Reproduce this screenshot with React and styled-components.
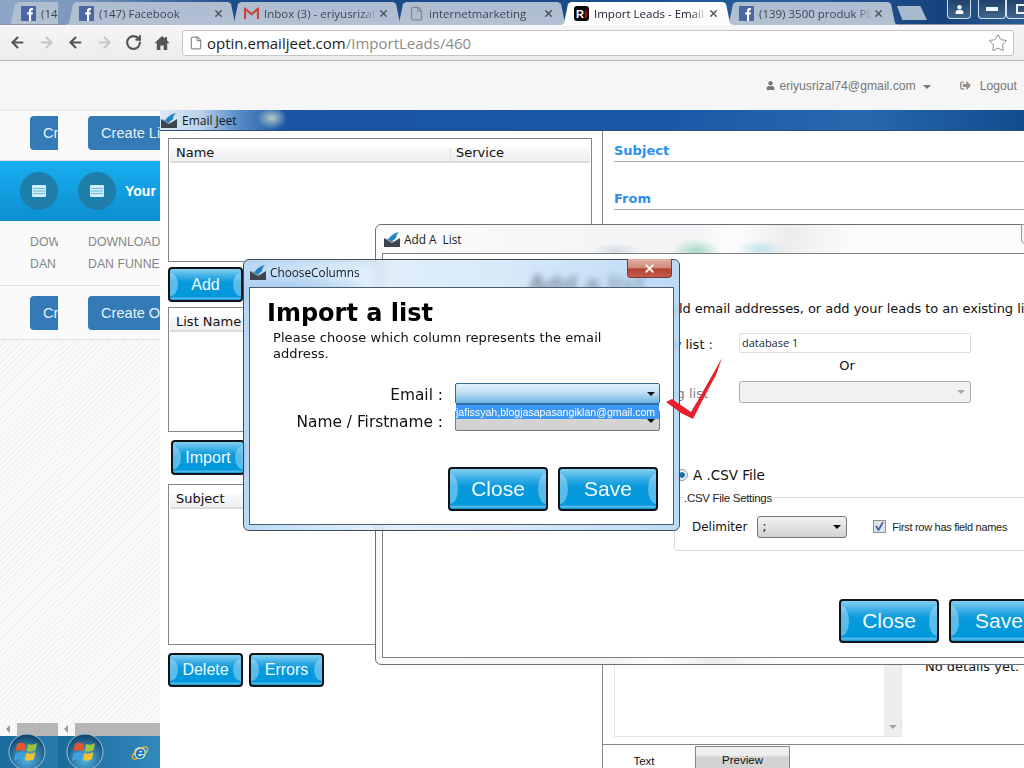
import React from "react";
import styled, { createGlobalStyle } from "styled-components";
import { ArrowLeft, ArrowRight, RotateCw, Star, X, File } from "lucide-react";
import { FaUser, FaSignOutAlt } from "react-icons/fa";

const GlobalStyle = createGlobalStyle`
  html, body {
    margin: 0;
    padding: 0;
    overflow: hidden;
    background: #fff;
  }
  * {
    box-sizing: border-box;
  }
`;

const wpfFont = `"DejaVu Sans", Verdana, sans-serif`;
const arialFont = `"Liberation Sans", Arial, sans-serif`;
const uiFont = `"Open Sans", "Noto Sans", sans-serif`;

const Screen = styled.div`
  position: relative;
  width: 1024px;
  height: 768px;
  overflow: hidden;
  font-family: ${arialFont};
`;

/* browser chrome */
const TabStrip = styled.div`
  display: flex;
  height: 25px;
  background: linear-gradient(
    90deg,
    #8ea6c8 0,
    #7f9ac0 58px,
    #7d99c0 70px,
    #1d4c8a 235px,
    #1a4a88 560px,
    #2b5f9e 800px,
    #15427c 940px,
    #2c5c94 1024px
  );
  border-bottom: 1px solid #8d99a8;
`;

const TabClip = styled.div`
  flex: none;
  width: 58px;
  overflow: hidden;
  padding-left: 8px;
  padding-top: 2px;
`;

const TabRow = styled.div`
  display: flex;
  flex: none;
  padding-left: 8px;
  padding-top: 2px;
`;

const Tab = styled.div`
  display: flex;
  flex: none;
  align-items: center;
  width: 172px;
  height: 23px;
  padding: 0 13px 0 13px;
  margin-left: ${(p) => (p.$first ? "0" : "-7px")};
  position: relative;
  z-index: ${(p) => (p.$active ? 2 : 1)};
  clip-path: polygon(0 100%, 3px 92%, 7px 8%, 10px 0, calc(100% - 10px) 0, calc(100% - 7px) 8%, calc(100% - 3px) 92%, 100% 100%);
  background: ${(p) =>
    p.$active
      ? "linear-gradient(#ffffff, #fbfbfb)"
      : "linear-gradient(#adbccf, #b3c1d3)"};
`;

const TabLabel = styled.span`
  flex: 1;
  margin-left: 5px;
  overflow: hidden;
  white-space: nowrap;
  font: 11.5px ${uiFont};
  color: ${(p) => (p.$active ? "#1c1c30" : "#3e4654")};
  -webkit-mask-image: linear-gradient(90deg, #000 85%, transparent 100%);
  mask-image: linear-gradient(90deg, #000 85%, transparent 100%);
`;

const TabClose = styled(X)`
  flex: none;
  margin-right: 1px;
  color: #4c5058;
`;

const NewTab = styled.div`
  flex: none;
  width: 30px;
  height: 14px;
  margin: 4px 0 0 -1px;
  background: #a9bace;
  clip-path: polygon(0 0, 78% 0, 100% 100%, 18% 100%);
`;

const WindowButtons = styled.div`
  display: flex;
  flex: none;
  height: 19px;
  margin-left: 20px;
  margin-top: -2px;
  gap: 7px;
`;

const CaptionButton = styled.div`
  display: flex;
  align-items: center;
  justify-content: center;
  width: ${(p) => p.$width}px;
  height: 19px;
  margin-left: ${(p) => (p.$joined ? "-7px" : "0")};
  border: 1px solid #d5dfea;
  border-top: 0;
  border-radius: 0 0 4px 4px;
  background: linear-gradient(#1f426a, #3f6690);
`;

const Toolbar = styled.div`
  display: flex;
  align-items: center;
  height: 36px;
  padding-left: 9px;
  background: linear-gradient(#f6f6f6, #ececec);
  border-bottom: 1px solid #b4b4b4;
`;

const NavGroup = styled.div`
  display: flex;
  flex: none;
  align-items: center;
  gap: 12px;
  width: ${(p) => p.$width}px;
`;

const AddressBar = styled.div`
  display: flex;
  flex: none;
  align-items: center;
  width: 832px;
  height: 26px;
  margin-left: 0;
  padding: 0 5px 0 6px;
  background: #fff;
  border: 1px solid #c4c4c4;
  border-radius: 3px;
  font: 15px ${uiFont};
  color: #8b8b8b;
`;

const Host = styled.span`
  margin-left: 4px;
  color: #1c1c1c;
`;

const AddressStar = styled(Star)`
  margin-left: auto;
  color: #8c8c8c;
`;

const PageHeader = styled.div`
  display: flex;
  align-items: center;
  justify-content: flex-end;
  height: 49px;
  padding: 0 7px 0 0;
  background: #f6f6f6;
  font-size: 12.2px;
  color: #777;
`;

const UserMenu = styled.div`
  display: flex;
  align-items: center;
  gap: 4px;
`;

const Caret = styled.span`
  width: 0;
  height: 0;
  margin-left: 3px;
  margin-top: 2px;
  border-left: 4px solid transparent;
  border-right: 4px solid transparent;
  border-top: 4px solid #777;
`;

const LogoutLink = styled.div`
  display: flex;
  align-items: center;
  gap: 9px;
  margin-left: 29px;
`;

/* web page sliced behind the window */
const Workspace = styled.div`
  display: flex;
  height: 658px;
`;

const PageSlice = styled.div`
  flex: none;
  width: ${(p) => p.$width}px;
  overflow: hidden;
`;

const PageColumn = styled.div`
  display: flex;
  flex-direction: column;
  width: 300px;
  height: 658px;
  background: #fafafa;
`;

const ButtonRow = styled.div`
  height: ${(p) => p.$height}px;
  padding: ${(p) => p.$top}px 0 0 30px;
  border-top: ${(p) => (p.$ruled ? "1px solid #e2e2e2" : "0")};
  border-bottom: 1px solid #dedede;
`;

const BlueButton = styled.div`
  width: 120px;
  height: 34px;
  padding-left: 13px;
  border-radius: 4px;
  background: #337ab7;
  color: #e6f0f8;
  font-size: 14.6px;
  line-height: 34px;
  white-space: nowrap;
`;

const Band = styled.div`
  display: flex;
  align-items: center;
  gap: 9px;
  height: 60px;
  padding-left: 20px;
  background: linear-gradient(#17aef0, #0c8fcf);
  color: #fff;
  font-size: 14px;
  font-weight: bold;
  white-space: nowrap;
`;

const BandCircle = styled.div`
  display: flex;
  align-items: center;
  justify-content: center;
  flex: none;
  width: 38px;
  height: 38px;
  border-radius: 50%;
  background: #1e7ea9;
`;

const Downloads = styled.div`
  height: 64px;
  padding: 10px 0 0 30px;
  color: #868686;
  font-size: 12.3px;
  line-height: 22px;
  white-space: nowrap;
`;

const Hatch = styled.div`
  flex: 1;
  background: repeating-linear-gradient(135deg, #f0f0f0 0 1px, #fafafa 1px 4px);
`;

const PageScroll = styled.div`
  display: flex;
  align-items: center;
  flex: none;
  height: 14px;
  padding-left: 6px;
  background: #f7f7f7;
`;

const ScrollArrow = styled.span`
  width: 0;
  height: 0;
  border-top: 4px solid transparent;
  border-bottom: 4px solid transparent;
  border-right: 4px solid #9a9a9a;
`;

const ScrollThumb = styled.div`
  flex: 1;
  height: 13px;
  margin-left: 7px;
  background: #b6b6b6;
`;

const Taskbar = styled.div`
  display: flex;
  align-items: flex-start;
  flex: none;
  height: 32px;
  padding-left: 8px;
  background: linear-gradient(90deg, #1b6a9c 0, #2a7fb0 70px, #3d9dcf 160px);
`;

const Orb = styled.svg`
  flex: none;
  margin-top: -3px;
`;

const IeLogo = styled.svg`
  flex: none;
  margin: 8px 0 0 27px;
`;

/* desktop windows */
const MainWindow = styled.div`
  display: flex;
  flex-direction: column;
  flex: 1;
  min-width: 0;
  background: #fff;
`;

const MainTitle = styled.div`
  display: flex;
  align-items: center;
  flex: none;
  gap: 5px;
  height: 21px;
  padding-left: 1px;
  border-bottom: 1px solid #2c4f7c;
  background:
    radial-gradient(ellipse 15px 11px at 112px 8px, rgba(215, 228, 205, 0.8) 0, rgba(223, 232, 200, 0) 100%),
    linear-gradient(90deg, #dde9f5 0, #bcd4ec 40px, #5c90ca 75px, #1a55a5 125px, #1a58a6 500px, #2868ae 700px, #114c8e 864px);
  font: 12px ${uiFont};
  color: #101820;
`;

const MainBody = styled.div`
  display: flex;
  flex: 1;
  min-height: 0;
`;

const LeftPane = styled.div`
  flex: none;
  width: 442px;
  padding: 7px 10px 0 8px;
`;

const Panel = styled.div`
  height: ${(p) => p.$height}px;
  margin-top: ${(p) => p.$gap}px;
  padding: 9px 1px 0;
  border: 1px solid #82858c;
`;

const PanelHead = styled.div`
  display: flex;
  height: 15px;
  padding-left: 6px;
  border-bottom: 2px solid #dcdcdc;
  background: linear-gradient(#f8f8f9, #eeeff1);
  font: 13px/10px ${wpfFont};
  color: #111;
`;

const HeadCell = styled.div`
  width: ${(p) => p.$width}px;
  border-right: ${(p) => (p.$last ? "0" : "1px solid #e2e2e2")};
  padding-left: ${(p) => (p.$last ? "5px" : "0")};
`;

const Actions = styled.div`
  display: flex;
  gap: ${(p) => p.$gap}px;
  margin-top: ${(p) => p.$top}px;
  padding-left: ${(p) => p.$left || 0}px;
`;

const GlassButton = styled.div`
  position: relative;
  display: flex;
  align-items: center;
  justify-content: center;
  flex: none;
  width: ${(p) => p.$width}px;
  height: ${(p) => p.$height}px;
  border: 2px solid #101418;
  border-radius: 4px;
  overflow: hidden;
  background: linear-gradient(
    #86d0f2 0,
    #3fb0e6 22%,
    #0a9adc 42%,
    #0098dc 90%,
    #5bbfec 94%,
    #0a92d4 100%
  );
  color: #f4fbff;
  font-family: ${arialFont};
  font-size: ${(p) => p.$size}px;

  &::before,
  &::after {
    content: "";
    position: absolute;
    top: 12%;
    bottom: 12%;
    width: 8px;
    background: rgba(190, 230, 250, 0.45);
  }
  &::before {
    left: 0;
    border-radius: 0 100% 100% 0 / 0 50% 50% 0;
  }
  &::after {
    right: 0;
    border-radius: 100% 0 0 100% / 50% 0 0 50%;
  }
`;

const RightPane = styled.div`
  display: flex;
  flex-direction: column;
  flex: 1;
  min-width: 0;
  padding-left: 11px;
  border-left: 1px solid #84878d;
`;

const FieldHead = styled.div`
  flex: none;
  height: ${(p) => p.$height}px;
  padding-top: ${(p) => p.$top}px;
  border-bottom: 1px solid #a9abaf;
  color: #2a90ee;
  font: bold 13px/16px ${wpfFont};
`;

const DetailRow = styled.div`
  display: flex;
  flex: none;
  height: 97px;
  margin-top: 430px;
`;

const MessageBox = styled.div`
  display: flex;
  justify-content: flex-end;
  flex: none;
  width: 288px;
  border: 1px solid #e4e5e9;
`;

const MessageScroll = styled.div`
  display: flex;
  align-items: flex-end;
  justify-content: center;
  width: 17px;
  padding-bottom: 7px;
  background: #eeeeee;

  &::after {
    content: "";
    border-left: 4px solid transparent;
    border-right: 4px solid transparent;
    border-top: 4px solid #a4a4a4;
  }
`;

const DetailText = styled.div`
  margin-left: 23px;
  padding-top: 19px;
  white-space: nowrap;
  font: 13px/16px ${wpfFont};
  color: #111;
`;

const TabBar = styled.div`
  display: flex;
  flex: none;
  height: 24px;
  margin: 7px 0 0 -11px;
  border-top: 1px solid #84878d;
`;

const DocTab = styled.div`
  flex: none;
  width: ${(p) => p.$width}px;
  height: ${(p) => (p.$raised ? "23px" : "24px")};
  margin-top: ${(p) => (p.$raised ? "1px" : "0")};
  padding: ${(p) => (p.$raised ? "6px 0 0" : "9px 10px 0 0")};
  border: ${(p) => (p.$raised ? "1px solid #84878d" : "0")};
  border-bottom: 0;
  background: ${(p) =>
    p.$raised ? "linear-gradient(#f2f2f2 0, #ececec 40%, #d4d4d4 45%, #d2d2d2 100%)" : "#fff"};
  text-align: center;
  font-size: 11.5px;
  line-height: 14px;
  color: #111;
`;

const AddListWindow = styled.div`
  position: absolute;
  left: 375px;
  top: 224px;
  display: flex;
  flex-direction: column;
  width: 720px;
  height: 441px;
  padding: 0 6px 6px;
  border: 1px solid #6d7177;
  border-radius: 6px;
  background:
    radial-gradient(ellipse 24px 12px at 320px 26px, #a9d8c8 0, rgba(169, 216, 200, 0) 100%),
    radial-gradient(ellipse 24px 9px at 385px 24px, #c2e2ee 0, rgba(194, 226, 238, 0) 100%),
    radial-gradient(ellipse 26px 8px at 240px 26px, #d7dde8 0, rgba(215, 221, 232, 0) 100%),
    linear-gradient(100deg, #fbfbfb 0, #f1f3f4 40%, #fdfdfd 45%, #ececec 52%, #fbfbfb 60%);
`;

const GlassTitle = styled.div`
  display: flex;
  align-items: center;
  flex: none;
  gap: 4px;
  height: ${(p) => p.$height}px;
  padding-left: ${(p) => p.$left}px;
  padding-bottom: ${(p) => p.$pad}px;
  font: 11.8px ${uiFont};
  color: #151a20;
  white-space: pre;
`;

const TitleStub = styled.div`
  position: absolute;
  left: 645px;
  top: -1px;
  width: 40px;
  height: 20px;
  border: 1px solid #999;
  border-radius: 0 0 4px 4px;
  background: #f5f5f5;
`;

const AddListBody = styled.div`
  flex: 1;
  min-height: 0;
  padding-top: 19px;
  border: 1px solid #7d8187;
  background: #fff;
  color: #111;
  font: 13px ${wpfFont};
`;

const BlurredHeading = styled.div`
  height: 27px;
  padding-left: 146px;
  font: bold 22px/22px ${wpfFont};
  color: #111;
`;

const IntroText = styled.div`
  height: 17px;
  margin-top: 1px;
  padding-left: 150px;
  white-space: nowrap;
  line-height: 16px;
  letter-spacing: -0.05px;
`;

const FormGrid = styled.div`
  display: grid;
  grid-template-columns: 330px 232px;
  column-gap: 26px;
  align-items: center;
  margin-top: 15px;
`;

const FormLabel = styled.div`
  padding-right: ${(p) => (p.$muted ? "5px" : "0")};
  padding-top: 3px;
  text-align: right;
  color: ${(p) => (p.$muted ? "#808080" : "#111")};
  white-space: nowrap;
`;

const TextInput = styled.div`
  height: 20px;
  padding-left: 2px;
  border: 1px solid #d9dce2;
  border-radius: 2px;
  font: 11px/17px ${uiFont};
  color: #202a38;
`;

const OrText = styled.div`
  grid-column: 2;
  height: 28px;
  padding: 5px 16px 0 0;
  text-align: center;
  line-height: 16px;
`;

const DisabledSelect = styled.div`
  display: flex;
  align-items: center;
  justify-content: flex-end;
  height: 22px;
  padding-right: 5px;
  border: 1px solid #acacac;
  border-radius: 3px;
  background: #f1f1f1;

  &::after {
    content: "";
    border-left: 4px solid transparent;
    border-right: 4px solid transparent;
    border-top: 4px solid #a8a8a8;
  }
`;

const RadioRow = styled.div`
  display: flex;
  align-items: center;
  gap: 5px;
  height: 16px;
  margin-top: 64px;
  padding-left: 293px;
  font-size: 13.5px;
`;

const RadioDot = styled.div`
  flex: none;
  width: 12px;
  height: 12px;
  border-radius: 50%;
  border: 1px solid #8e9aa4;
  background: radial-gradient(circle, #1a6ea8 0, #1a6ea8 35%, #e8eef2 45%);
`;

const CsvSettings = styled.fieldset`
  display: flex;
  align-items: center;
  width: 400px;
  height: 62px;
  margin: 6px 0 0 291px;
  padding: 0 0 3px 17px;
  border: 1px solid #d5dfe9;
  border-radius: 3px;
  font-size: 12px;
`;

const CsvLegend = styled.legend`
  margin-left: -9px;
  padding: 1px 1px 0;
  font: 11.5px/16px ${arialFont};
  letter-spacing: -0.3px;
  color: #222;
`;

const DelimiterSelect = styled.div`
  display: flex;
  align-items: center;
  justify-content: space-between;
  width: 90px;
  height: 22px;
  margin-left: 10px;
  padding: 0 5px 0 4px;
  border: 1px solid #777;
  border-radius: 3px;
  background: linear-gradient(#f2f2f2, #d2d2d2);
  font-size: 13px;

  &::after {
    content: "";
    border-left: 4px solid transparent;
    border-right: 4px solid transparent;
    border-top: 4px solid #111;
  }
`;

const CheckBox = styled.div`
  display: flex;
  align-items: center;
  justify-content: center;
  flex: none;
  width: 13px;
  height: 13px;
  margin-left: 26px;
  border: 1px solid #8f8f8f;
  background: #dfe3ea;
`;

const CheckLabel = styled.span`
  margin-left: 6px;
  font: 11px ${arialFont};
  letter-spacing: -0.3px;
  white-space: nowrap;
  color: #222;
`;

const DialogWindow = styled.div`
  position: absolute;
  left: 243px;
  top: 259px;
  display: flex;
  flex-direction: column;
  width: 437px;
  height: 272px;
  padding: 0 5px 5px;
  border: 1px solid #3f4c58;
  border-radius: 6px;
  background:
    radial-gradient(ellipse 80px 20px at 50px 32px, rgba(130, 180, 225, 0.55) 0, rgba(130, 180, 225, 0) 100%),
    linear-gradient(90deg, rgba(170, 208, 244, 0.82), rgba(205, 228, 248, 0.6) 30%, rgba(190, 218, 244, 0.6) 60%, rgba(178, 212, 244, 0.86));
  backdrop-filter: blur(3px);
`;

const DialogClose = styled.div`
  position: absolute;
  left: 383px;
  top: -1px;
  display: flex;
  align-items: center;
  justify-content: center;
  width: 45px;
  height: 19px;
  border: 1px solid #7b3b34;
  border-top: 0;
  border-radius: 0 0 4px 4px;
  background: linear-gradient(#e0b0a4 0, #d28a7c 48%, #b5402f 55%, #c45c4c 100%);
`;

const DialogBody = styled.div`
  flex: 1;
  min-height: 0;
  padding: 9px 0 0 17px;
  border: 1px solid #4e5c69;
  background: #fff;
  color: #111;
`;

const DialogHeading = styled.h1`
  margin: 0;
  font: bold 24px/33px ${wpfFont};
  color: #000;
`;

const DialogText = styled.p`
  width: 345px;
  margin: 0 0 0 6px;
  font: 13px/16px ${wpfFont};
  letter-spacing: 0.07px;
`;

const ColumnGrid = styled.div`
  position: relative;
  display: grid;
  grid-template-columns: 176px 205px;
  column-gap: 12px;
  row-gap: 6px;
  align-items: center;
  margin-top: 21px;
  font: 15.4px ${wpfFont};
`;

const ColumnLabel = styled.div`
  padding-top: 2px;
  text-align: right;
  white-space: nowrap;
`;

const Combo = styled.div`
  display: flex;
  align-items: center;
  justify-content: flex-end;
  height: 21px;
  padding-right: 4px;
  border: 1px solid ${(p) => (p.$open ? "#3b6a8f" : "#777")};
  border-radius: 2px;
  background: ${(p) =>
    p.$open ? "linear-gradient(#e3f2fb 0, #bfe0f4 45%, #6db6e2 100%)" : "linear-gradient(#dcdcdc, #cfcfcf)"};

  &::after {
    content: "";
    border-left: 4px solid transparent;
    border-right: 4px solid transparent;
    border-top: 4px solid #111;
    margin-top: 1px;
  }
`;

const ComboList = styled.div`
  position: absolute;
  left: 189px;
  top: 21px;
  width: 203px;
  height: 15px;
  background: #3c98f4;
  border-top: 1px solid #2c6fb0;
  color: #fff;
  font: 10.6px/14px ${arialFont};
  white-space: nowrap;
`;

const CheckMark = styled.svg`
  position: absolute;
  left: 660px;
  top: 350px;
`;

const FacebookIcon = () => (
  <svg width="15" height="15" viewBox="0 0 15 15">
    <rect width="15" height="15" fill="#4a66a5" />
    <path d="M8 15V8.6H6.2V6.2H8V4.5C8 2.9 9 2 10.4 2h1.5v2.3h-1c-.6 0-.8.3-.8.8v1.1h1.8l-.3 2.4h-1.5V15z" fill="#fff" />
  </svg>
);

const GmailIcon = () => (
  <svg width="15" height="15" viewBox="0 0 15 15">
    <path d="M1 13V3l6.5 5L14 3v10" fill="none" stroke="#c8453a" strokeWidth="2.2" />
  </svg>
);

const BrandFavicon = styled.span`
  display: flex;
  align-items: center;
  justify-content: center;
  flex: none;
  width: 15px;
  height: 15px;
  border-radius: 3px;
  background: #0a0a0a;
  color: #fff;
  font: bold 11px ${arialFont};
`;

const BrandI = styled.span`
  color: #e01010;
`;

const WinIcon = () => (
  <svg width="16" height="15" viewBox="0 0 16 15">
    <path d="M0 6l8 5 8-5v9H0z" fill="#3c4650" />
    <path d="M1 6l5 3.500L8 11l2-1-3-2z" fill="#7c8690" />
    <path d="M4 8C6 4 10 1 15 0c-2 2-3 4-3 6-1 1-2 2-4 3z" fill="#1f86c6" />
  </svg>
);

const HomeIcon = () => (
  <svg width="16" height="16" viewBox="0 0 16 16">
    <path d="M8 1L0.5 8.2h2.3V15h3.6v-4.5h3.2V15h3.6V8.2h2.3L13 5.3V2h-2v1.400z" fill="#555" />
  </svg>
);

const ListGlyph = () => (
  <svg width="14" height="12" viewBox="0 0 14 12">
    <rect width="14" height="12" rx="1" fill="#cdeefb" />
    <path d="M1 3.5h12M1 6h12M1 8.5h12" stroke="#6fb7da" strokeWidth="1" />
  </svg>
);

const StartOrb = () => (
  <Orb width="38" height="38" viewBox="0 0 38 38">
    <defs>
      <radialGradient id="orbFill" cx="50%" cy="70%" r="70%">
        <stop offset="0" stopColor="#55b8e8" />
        <stop offset="1" stopColor="#0c3f66" />
      </radialGradient>
    </defs>
    <circle cx="19" cy="19" r="18" fill="url(#orbFill)" stroke="#9fc4dc" strokeWidth="1" />
    <path d="M9 11c3-2 6-1 9 0l-1.400 7c-3-1-6-1-9 0z" fill="#e2582c" />
    <path d="M20 11c3 1 6 1 9-1l-1.400 7c-3 2-6 2-9 1z" fill="#9ac43c" />
    <path d="M7.300 20c3-1 6-1 9 0L15 27c-3-1-6-1-9 1z" fill="#3f9ee0" />
    <path d="M18.300 20c3 1 6 1 9-1L26 26c-3 2-6 2-9 1z" fill="#f6c22c" />
  </Orb>
);

const IeIcon = () => (
  <IeLogo width="18" height="18" viewBox="0 0 18 18">
    <circle cx="9" cy="9" r="6" fill="#cfe9f8" />
    <ellipse cx="9" cy="9" rx="9" ry="4" fill="none" stroke="#e8b82c" strokeWidth="1.300" transform="rotate(-35 9 9)" />
    <text x="9" y="14" textAnchor="middle" fill="#0f6fc4" fontFamily="Liberation Sans" fontWeight="bold" fontStyle="italic" fontSize="17">
      e
    </text>
  </IeLogo>
);

const WebPage = () => (
  <PageColumn>
    <ButtonRow $height={51} $top={5} $ruled>
      <BlueButton>Create List</BlueButton>
    </ButtonRow>
    <Band>
      <BandCircle>
        <ListGlyph />
      </BandCircle>
      Your current lists
    </Band>
    <Downloads>
      DOWNLOAD
      <br />
      DAN FUNNEL
    </Downloads>
    <ButtonRow $height={55} $top={10} $ruled>
      <BlueButton>Create Optin</BlueButton>
    </ButtonRow>
    <Hatch />
    <PageScroll>
      <ScrollArrow />
      <ScrollThumb />
    </PageScroll>
    <Taskbar>
      <StartOrb />
      <IeIcon />
    </Taskbar>
  </PageColumn>
);

const browserTabs = [
  { icon: <FacebookIcon />, label: "(147) Facebook" },
  { icon: <GmailIcon />, label: "Inbox (3) - eriyusrizal74@gmail.com" },
  { icon: <File size={15} color="#8a8a8a" />, label: "internetmarketing" },
  {
    icon: (
      <BrandFavicon>
        R<BrandI>i</BrandI>
      </BrandFavicon>
    ),
    label: "Import Leads - Email Jeet",
    active: true,
  },
  { icon: <FacebookIcon />, label: "(139) 3500 produk PLR" },
];

export default function App() {
  return (
    <Screen>
      <GlobalStyle />
      <TabStrip>
        <TabClip>
          <Tab $first>
            <FacebookIcon />
            <TabLabel>(147) Facebook</TabLabel>
          </Tab>
        </TabClip>
        <TabRow>
          {browserTabs.map((tab, i) => (
            <Tab key={tab.label} $first={i === 0} $active={tab.active}>
              {tab.icon}
              <TabLabel $active={tab.active}>{tab.label}</TabLabel>
              <TabClose size={11} strokeWidth={3} />
            </Tab>
          ))}
          <NewTab />
          <WindowButtons>
            <CaptionButton $width={24}>
              <FaUser size={9} color="#fff" />
            </CaptionButton>
            <CaptionButton $width={28}>
              <svg width="12" height="4" viewBox="0 0 12 4">
                <rect width="12" height="4" fill="#eef3f8" />
              </svg>
            </CaptionButton>
            <CaptionButton $width={30} $joined>
              <svg width="10" height="10" viewBox="0 0 10 10">
                <rect x="1" y="1" width="8" height="8" fill="none" stroke="#eef3f8" strokeWidth="2" />
              </svg>
            </CaptionButton>
          </WindowButtons>
        </TabRow>
      </TabStrip>

      <Toolbar>
        <NavGroup $width={58}>
          <ArrowLeft size={17} strokeWidth={3} color="#555" />
          <ArrowRight size={17} strokeWidth={3} color="#c6c6c6" />
        </NavGroup>
        <NavGroup $width={115}>
          <ArrowLeft size={17} strokeWidth={3} color="#555" />
          <ArrowRight size={17} strokeWidth={3} color="#c6c6c6" />
          <RotateCw size={17} strokeWidth={3} color="#555" />
          <HomeIcon />
        </NavGroup>
        <AddressBar>
          <File size={14} color="#8a8a8a" />
          <Host>optin.emailjeet.com</Host>/ImportLeads/460
          <AddressStar size={20} strokeWidth={1.2} />
        </AddressBar>
      </Toolbar>

      <PageHeader>
        <UserMenu>
          <FaUser size={9} color="#777" />
          eriyusrizal74@gmail.com
          <Caret />
        </UserMenu>
        <LogoutLink>
          <FaSignOutAlt size={11} color="#9a8f86" />
          Logout
        </LogoutLink>
      </PageHeader>

      <Workspace>
        <PageSlice $width={58}>
          <WebPage />
        </PageSlice>
        <PageSlice $width={102}>
          <WebPage />
        </PageSlice>

        <MainWindow>
          <MainTitle>
            <WinIcon />
            Email Jeet
          </MainTitle>
          <MainBody>
            <LeftPane>
              <Panel $height={124} $gap={0}>
                <PanelHead>
                  <HeadCell $width={275}>Name</HeadCell>
                  <HeadCell $last>Service</HeadCell>
                </PanelHead>
              </Panel>
              <Actions $gap={6} $top={5}>
                <GlassButton $width={75} $height={35} $size={16}>
                  Add
                </GlassButton>
              </Actions>
              <Panel $height={125} $gap={5}>
                <PanelHead>
                  <HeadCell $width={275}>List Name</HeadCell>
                </PanelHead>
              </Panel>
              <Actions $gap={6} $top={8} $left={3}>
                <GlassButton $width={74} $height={35} $size={16}>
                  Import
                </GlassButton>
              </Actions>
              <Panel $height={161} $gap={9}>
                <PanelHead>
                  <HeadCell $width={275}>Subject</HeadCell>
                </PanelHead>
              </Panel>
              <Actions $gap={6} $top={8}>
                <GlassButton $width={75} $height={34} $size={16}>
                  Delete
                </GlassButton>
                <GlassButton $width={75} $height={34} $size={16}>
                  Errors
                </GlassButton>
              </Actions>
            </LeftPane>
            <RightPane>
              <FieldHead $height={31} $top={12}>
                Subject
              </FieldHead>
              <FieldHead $height={48} $top={29}>
                From
              </FieldHead>
              <DetailRow>
                <MessageBox>
                  <MessageScroll />
                </MessageBox>
                <DetailText>No details yet.</DetailText>
              </DetailRow>
              <TabBar>
                <DocTab $width={92}>Text</DocTab>
                <DocTab $width={95} $raised>
                  Preview
                </DocTab>
              </TabBar>
            </RightPane>
          </MainBody>
        </MainWindow>
      </Workspace>

      <AddListWindow>
        <GlassTitle $height={28} $left={2} $pad={0}>
          <WinIcon />
          {"Add A  List"}
        </GlassTitle>
        <TitleStub />
        <AddListBody>
          <BlurredHeading>Add a list</BlurredHeading>
          <IntroText>Create a new list to hold email addresses, or add your leads to an existing list</IntroText>
          <FormGrid>
            <FormLabel>New list :</FormLabel>
            <TextInput>database 1</TextInput>
            <OrText>Or</OrText>
            <FormLabel $muted>Existing list</FormLabel>
            <DisabledSelect />
          </FormGrid>
          <RadioRow>
            <RadioDot />A .CSV File
          </RadioRow>
          <CsvSettings>
            <CsvLegend>.CSV File Settings</CsvLegend>
            Delimiter
            <DelimiterSelect>;</DelimiterSelect>
            <CheckBox>
              <svg width="9" height="9" viewBox="0 0 9 9">
                <path d="M1 4l2.500 4L8 0" fill="none" stroke="#4a60a8" strokeWidth="1.800" />
              </svg>
            </CheckBox>
            <CheckLabel>First row has field names</CheckLabel>
          </CsvSettings>
          <Actions $gap={10} $top={48} $left={456}>
            <GlassButton $width={100} $height={44} $size={21}>
              Close
            </GlassButton>
            <GlassButton $width={100} $height={44} $size={21}>
              Save
            </GlassButton>
          </Actions>
        </AddListBody>
      </AddListWindow>

      <DialogWindow>
        <GlassTitle $height={27} $left={1} $pad={3}>
          <WinIcon />
          ChooseColumns
        </GlassTitle>
        <DialogClose>
          <X size={13} strokeWidth={3.5} color="#f6f0ee" />
        </DialogClose>
        <DialogBody>
          <DialogHeading>Import a list</DialogHeading>
          <DialogText>Please choose which column represents the email address.</DialogText>
          <ColumnGrid>
            <ColumnLabel>Email :</ColumnLabel>
            <Combo $open />
            <ColumnLabel>Name / Firstname :</ColumnLabel>
            <Combo />
            <ComboList>jafissyah,blogjasapasangiklan@gmail.com</ComboList>
          </ColumnGrid>
          <Actions $gap={10} $top={36} $left={181}>
            <GlassButton $width={100} $height={44} $size={21}>
              Close
            </GlassButton>
            <GlassButton $width={100} $height={44} $size={21}>
              Save
            </GlassButton>
          </Actions>
        </DialogBody>
      </DialogWindow>

      <CheckMark width="70" height="80" viewBox="0 0 70 80">
        <path d="M6 52l6-3 19 13 10-17L62 8 56 25 50 36 40 55 33 69 21 63z" fill="#e8202c" />
      </CheckMark>
    </Screen>
  );
}
